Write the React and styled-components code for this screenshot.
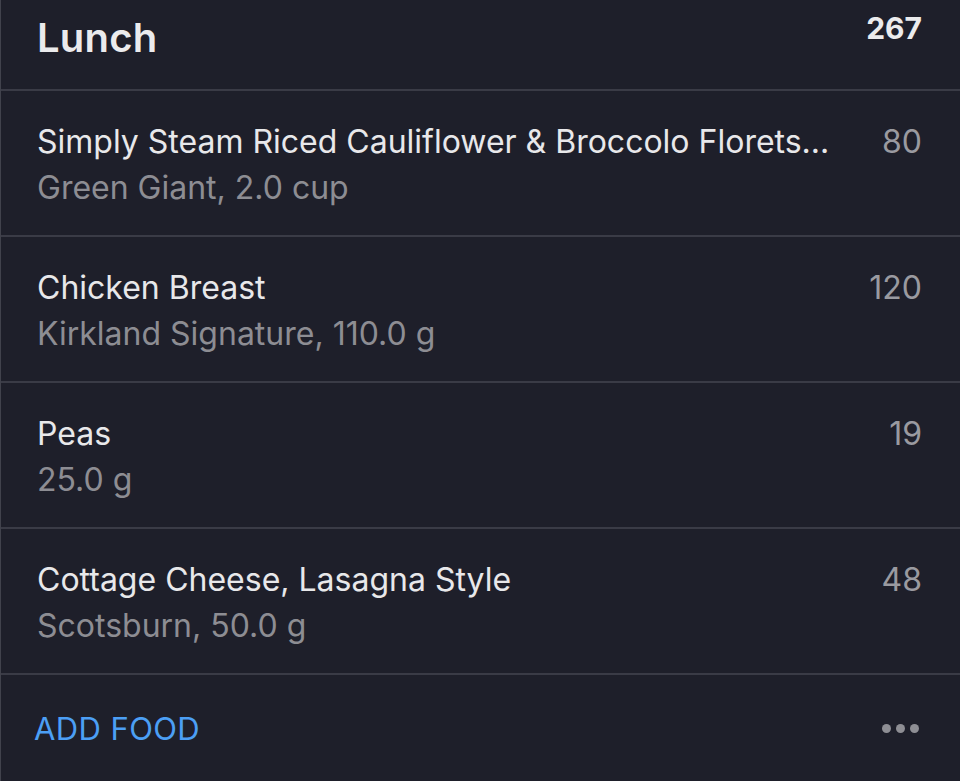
import React from 'react'
import styled, { createGlobalStyle } from 'styled-components'

const GlobalStyle = createGlobalStyle`
  html, body {
    margin: 0;
    padding: 0;
    background: #1e1f2a;
  }
  body {
    font-family: Inter, "Noto Sans", "Liberation Sans", sans-serif;
    -webkit-font-smoothing: antialiased;
  }
`

const foods = [
  { name: 'Simply Steam Riced Cauliflower & Broccolo Florets...', detail: 'Green Giant, 2.0 cup', cal: 80 },
  { name: 'Chicken Breast', detail: 'Kirkland Signature, 110.0 g', cal: 120 },
  { name: 'Peas', detail: '25.0 g', cal: 19 },
  { name: 'Cottage Cheese, Lasagna Style', detail: 'Scotsburn, 50.0 g', cal: 48 },
]

const Card = styled.section`
  width: 960px;
  height: 781px;
  box-sizing: border-box;
  border-left: 1px solid #41424c;
  background: #1e1f2a;
  display: flex;
  flex-direction: column;
  overflow: hidden;
`

const Header = styled.header`
  height: 91px;
  flex-shrink: 0;
  box-sizing: border-box;
  display: flex;
  justify-content: space-between;
  align-items: flex-start;
  padding: 0 38px 0 36px;
  border-bottom: 2px solid #3a3b46;
`

const Title = styled.h1`
  margin: 13px 0 0;
  font-size: 40px;
  font-weight: 600;
  color: #ebebed;
  letter-spacing: 0.2px;
`

const Total = styled.span`
  margin-top: 10px;
  font-size: 30px;
  font-weight: 700;
  color: #ebebed;
`

const Row = styled.div`
  height: 146px;
  flex-shrink: 0;
  box-sizing: border-box;
  display: flex;
  align-items: flex-start;
  gap: 40px;
  padding: 31px 38px 0 36px;
  border-bottom: 2px solid #3a3b46;
  line-height: 39px;
`

const Info = styled.div`
  flex: 1;
  min-width: 0;
  display: flex;
  flex-direction: column;
  gap: 7px;
`

const Name = styled.div`
  font-size: 32px;
  color: #e8e8ea;
  white-space: nowrap;
  overflow: hidden;
  text-overflow: ellipsis;
`

const Detail = styled.div`
  font-size: 32px;
  color: #8d8d93;
`

const Cal = styled.span`
  font-size: 32px;
  color: #9a9aa0;
`

const Footer = styled.footer`
  flex: 1;
  display: flex;
  justify-content: space-between;
  align-items: center;
  padding: 0 41px 0 33px;
`

const AddButton = styled.button`
  background: none;
  border: none;
  padding: 0;
  font-family: inherit;
  font-size: 31px;
  color: #4c9ff5;
  letter-spacing: 0.4px;
`

const Dots = styled.div`
  display: flex;
  gap: 5px;
  span {
    width: 9px;
    height: 9px;
    border-radius: 50%;
    background: #8e8e94;
  }
`

export default function App() {
  return (
    <>
      <GlobalStyle />
      <Card>
        <Header>
          <Title>Lunch</Title>
          <Total>267</Total>
        </Header>
        {foods.map((f) => (
          <Row key={f.name}>
            <Info>
              <Name>{f.name}</Name>
              <Detail>{f.detail}</Detail>
            </Info>
            <Cal>{f.cal}</Cal>
          </Row>
        ))}
        <Footer>
          <AddButton>ADD FOOD</AddButton>
          <Dots><span /><span /><span /></Dots>
        </Footer>
      </Card>
    </>
  )
}
